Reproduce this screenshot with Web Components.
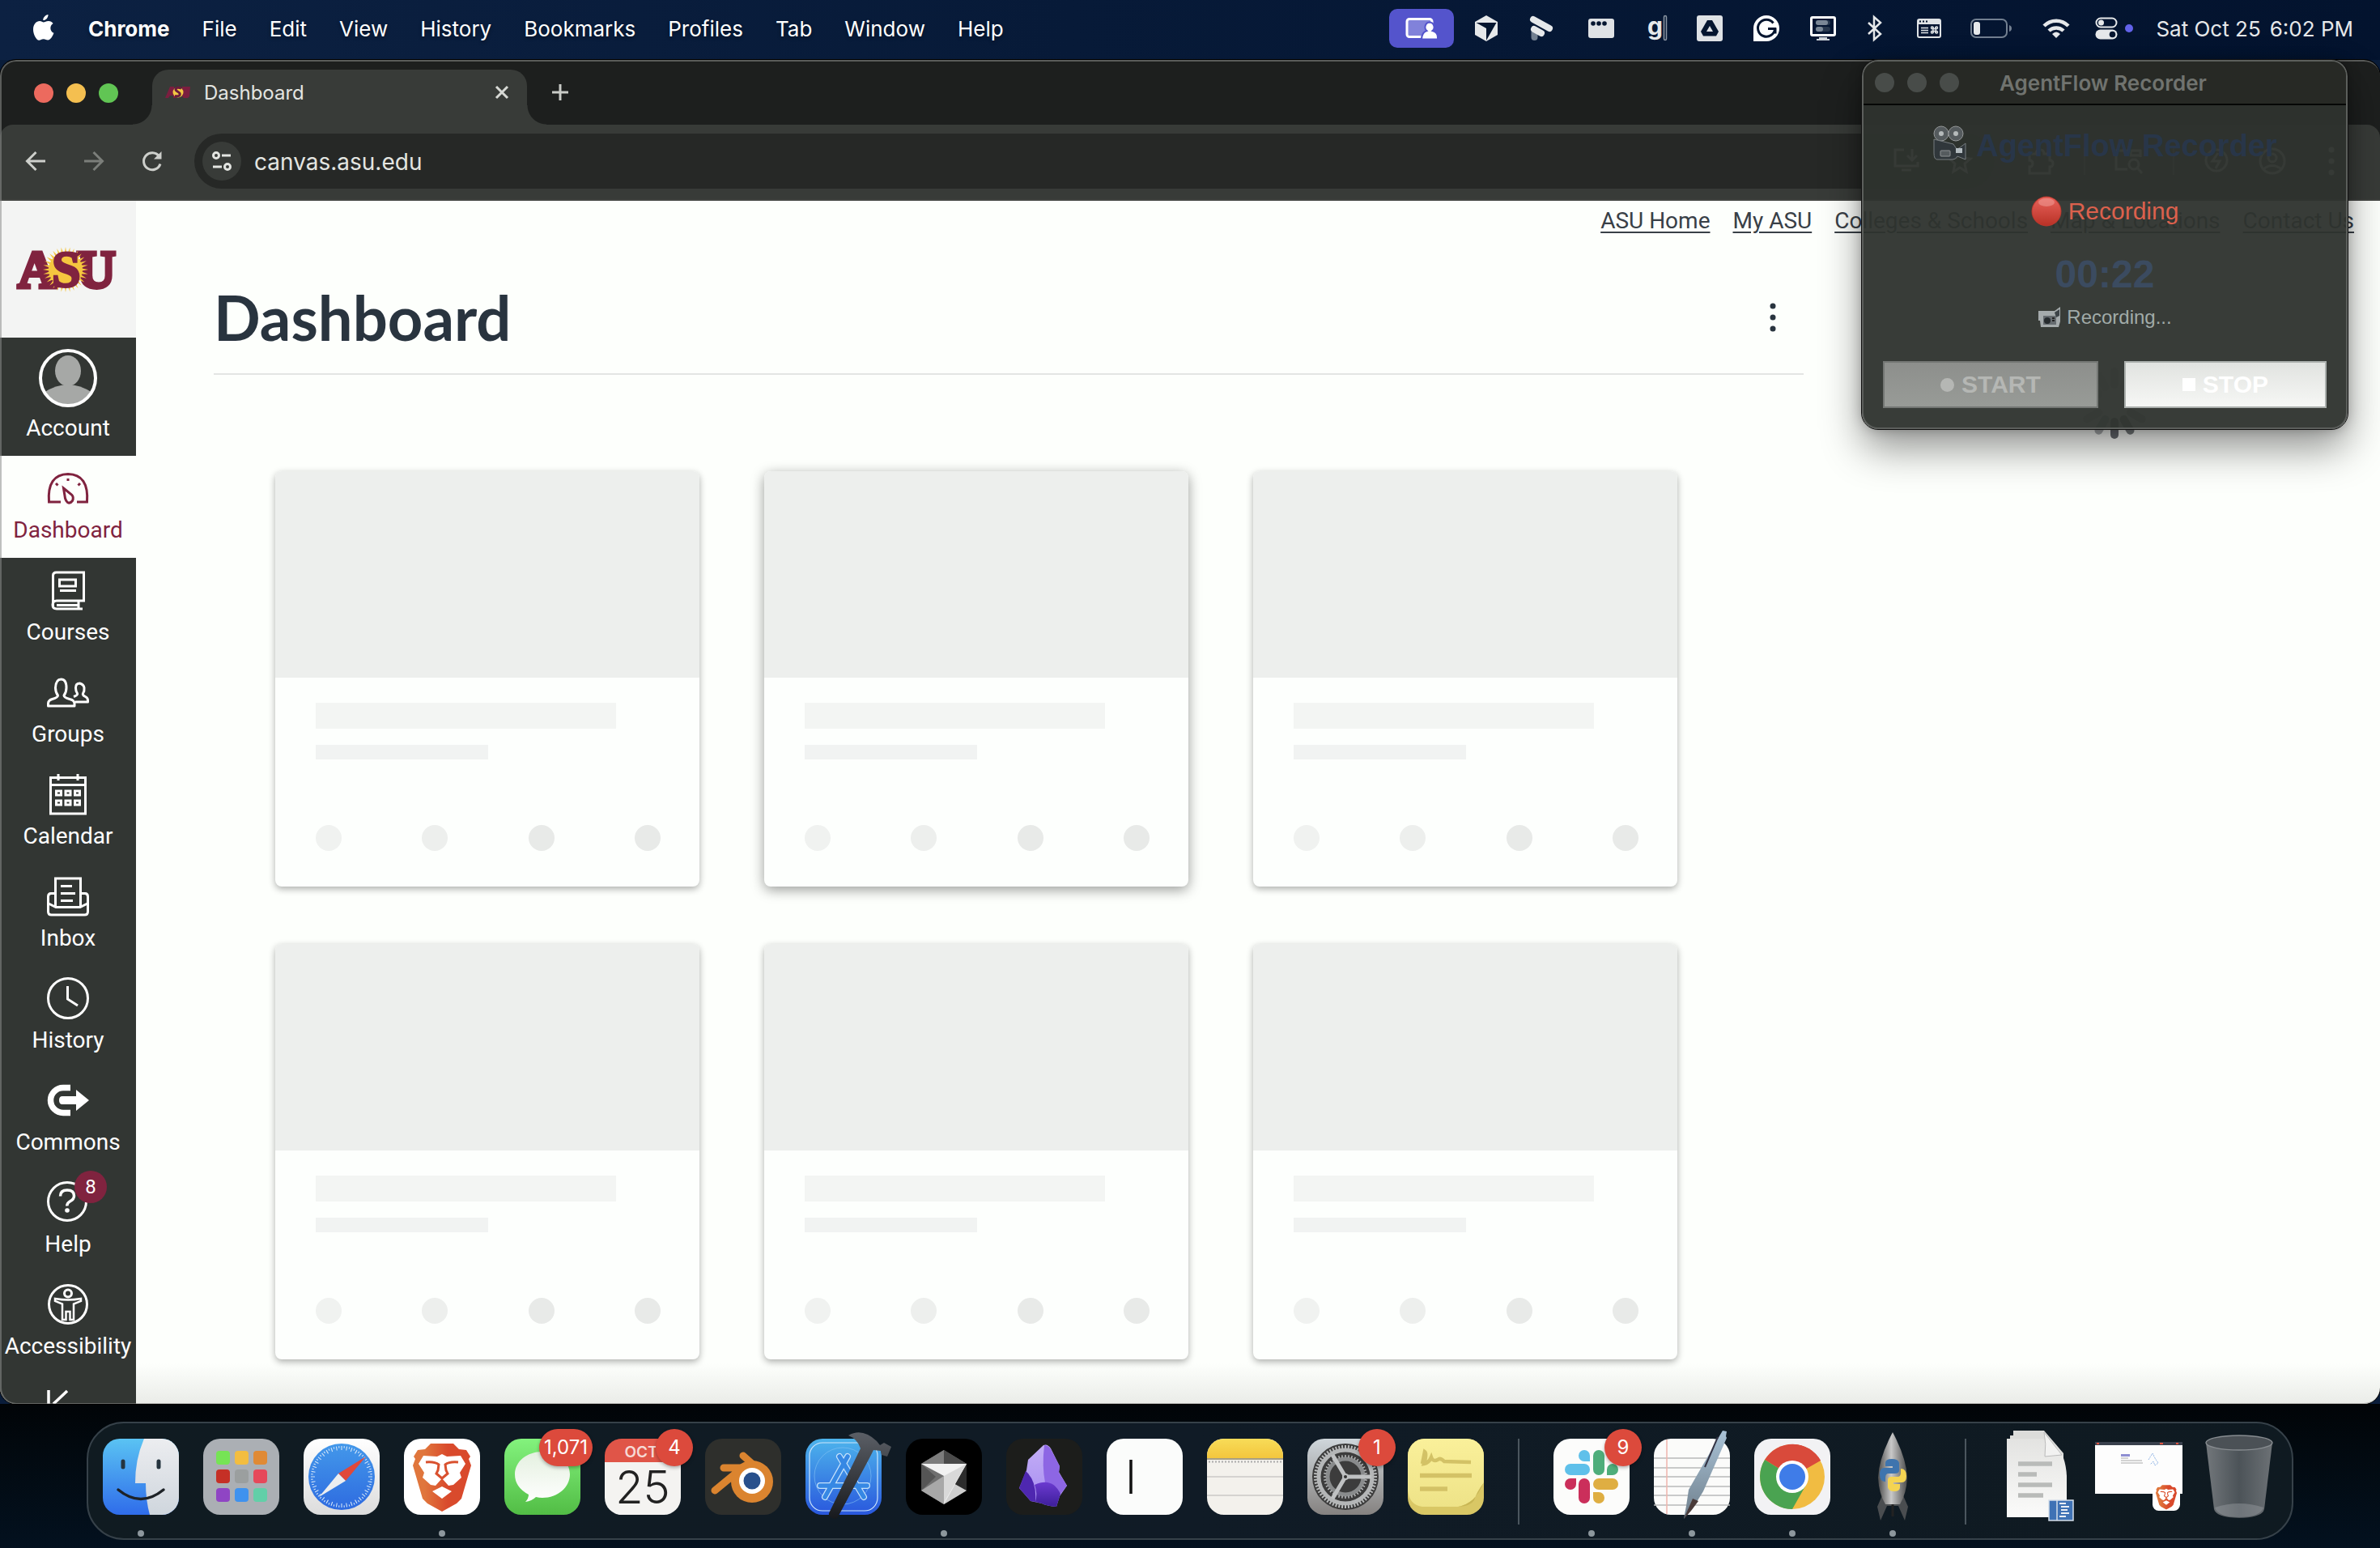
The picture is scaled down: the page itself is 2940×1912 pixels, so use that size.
<!DOCTYPE html>
<html lang="en">
<head>
<meta charset="utf-8">
<title>Dashboard</title>
<style>
html,body{margin:0;height:100%}
body{background:#020a14;font-family:Inter,"Liberation Sans",sans-serif;overflow:hidden}
</style>
</head>
<body>
<desktop-screen></desktop-screen>
<script>
const brave = `<path fill="url(#bl)" d="M33 6h28l7 7 9 1 5 8-2 3 3 8-12 41-6 6-18 10-18-10-6-6L11 33l3-8-2-3 5-8 9-1z"/><path fill="#fff" d="M24 21l17 1 6-3 6 3 17-1 6 10-7 11 2 6-10 9-6 1-8-9-8 9-6-1-10-9 2-6-7-11zM47 59l12 6-12 9-12-9z"/><path fill="none" stroke="#d9512f" stroke-width="3" d="M27 29q11-1 16 3l-1 7-2 4 7 6 7-6-2-4-1-7q5-4 16-3"/><defs><linearGradient id="bl"><stop offset=".2" stop-color="#e0763c"/><stop offset=".6" stop-color="#d94a2c"/></linearGradient></defs>`;
const tile = (fill) => `<rect width="94" height="94" rx="21" fill="${fill}"/>`;
const grad = (id,a,b) => `<defs><linearGradient id="${id}" x2="0" y2="1"><stop stop-color="${a}"/><stop offset="1" stop-color="${b}"/></linearGradient></defs>`;
const ticks = (n,cx,cy,r1,r2,w,c,d=1) => { let s=''; for(let i=0;i<n;i++){const t=i*2*Math.PI/n; const q=(i%2&&d>1)?(r2-r1)/2:0; s+=`M${(cx+(r1+q)*Math.cos(t)).toFixed(1)} ${(cy+(r1+q)*Math.sin(t)).toFixed(1)}L${(cx+r2*Math.cos(t)).toFixed(1)} ${(cy+r2*Math.sin(t)).toFixed(1)}`;} return `<path d="${s}" stroke="${c}" stroke-width="${w}" fill="none"/>`;};
const pads = ['#76e455','#f3bd40','#e08a35','#c53026','#9b9f9f','#e6485a','#8f45c4','#3f92ee','#62cfa8'].map((c,i)=>`<rect x="${16+(i%3)*23}" y="${15+Math.floor(i/3)*23}" width="17" height="17" rx="4" fill="${c}"/>`).join('');
const rays = (cx,cy,r1,r2,n) => { let s=''; for(let i=0;i<n;i++){const t=i*2*Math.PI/n,w=.09; const p=(r,a)=>(cx+r*Math.cos(a)).toFixed(1)+' '+(cy+r*Math.sin(a)).toFixed(1); s+=`M${p(r1,t-w)}L${p(r2,t)}L${p(r1,t+w)}z`;} return s;};

/* name: [width, height, viewBox, body] */
const ICONS = {
apple:[30,34,'0 0 30 34','<path fill="#fff" d="M20.500 0c.3 3.600-2.800 7.200-6.200 7.100C14 3.600 17.200.4 20.500 0zM14.800 9.500c1.500 0 3.300-1.700 6.200-1.600 2.300.1 4.300 1.100 5.600 3-4.800 3-4 9.800.9 11.900-1.400 4-4.400 8.800-7.300 8.800-2.200 0-2.800-1.300-5.500-1.300s-3.400 1.300-5.500 1.400C5.900 31.800 2 24.600 2 18.500 2 12 6 8.100 10 8.100c2.200 0 3.700 1.400 4.800 1.400z"/>'],
share:[40,28,'0 0 40 28','<rect x="2" y="2.500" width="31" height="22" rx="3" fill="#8182da" stroke="#fff" stroke-width="3"/><path d="M30 6.500a6 6 0 0 1 3.500 10.500c3.500 1 6.500 4 6.500 8v3H20c0-6 2-9.500 6.500-11A6 6 0 0 1 30 6.500z" fill="#fff" stroke="#5454cc" stroke-width="2"/><path d="M20 26.500h22V30H20z" fill="#5454cc"/>'],
cube:[30,32,'0 0 30 32','<path fill="#e6e8ea" d="M15 0l14 8v16l-14 8L1 24V8z"/><path fill="#04152f" d="M2.500 9h25L15 31V16z"/>'],
flow:[30,32,'0 0 30 32','<path d="M6.500 19v8" stroke="#727f90" stroke-width="8" stroke-linecap="round"/><path d="M5 5l20 11M6 17l9 5" stroke="#e6e8ea" stroke-width="8" stroke-linecap="round"/>'],
strip:[32,24,'0 0 32 24','<rect width="32" height="24" rx="3" fill="#dfe2e5"/><g fill="#04152f"><circle cx="6" cy="6" r="2.800"/><circle cx="13" cy="6" r="2.800"/><circle cx="20" cy="6" r="2.800"/></g>'],
gee:[26,34,'0 0 26 34','<text x="0" y="25" font-family="Inter,sans-serif" font-weight="700" font-size="30" fill="#e6e8ea">g</text><rect x="20.500" y="1.500" width="3" height="30" rx="1.500" fill="none" stroke="#8b96a3" stroke-width="1.500"/>'],
drive:[32,32,'0 0 32 32','<rect width="32" height="32" rx="3" fill="#dfe2e5"/><path d="M13 6h6l8 14-3 5.500H8L5 20z" fill="#04152f"/><path d="M16 13l4 7h-8z" fill="#dfe2e5"/>'],
gram:[32,32,'0 0 32 32','<path d="M16 0a16 16 0 1 1 0 32H0V16A16 16 0 0 1 16 0z" fill="#fff"/><path d="M24.500 9.500a10.500 10.500 0 1 0 2 7H18m9-1v7" fill="none" stroke="#04152f" stroke-width="3"/>'],
monitor:[32,30,'0 0 32 30','<rect x="1.500" y="1.500" width="29" height="22" rx="1.500" fill="none" stroke="#fff" stroke-width="3"/><rect x="7" y="5" width="18" height="6" rx="3" fill="#27374d"/><rect x="7" y="5" width="15" height="6" rx="3" fill="#7a8796"/><rect x="7" y="13" width="18" height="6" rx="3" fill="#27374d"/><rect x="7" y="13" width="9" height="6" rx="3" fill="#7a8796"/><path d="M11 26h10v2h3v2H8v-2h3z" fill="#cfd4da"/>'],
bt:[20,30,'0 0 20 30','<path d="M2 8l15 14-8 7V1l8 7L2 22" fill="none" stroke="#e6e8ea" stroke-width="2.500"/>'],
cmd:[30,24,'0 0 30 24','<rect x="1" y="1" width="28" height="22" rx="2" fill="none" stroke="#dfe2e5" stroke-width="2"/><path d="M1 1h28v6H1z" fill="#dfe2e5"/><path d="M3 3.500h2m2 0h2m2 0h2" stroke="#04152f" stroke-width="2"/><path d="M5 11.500h9M5 14.500h9M5 17.500h9" stroke="#dfe2e5" stroke-width="1.500"/><g fill="none" stroke="#dfe2e5" stroke-width="1.400"><path d="M20 10v8m3-8v8m-5-5.500h7m-7 3h7"/><rect x="17.500" y="10" width="2.500" height="2.500" rx="1"/><rect x="23" y="10" width="2.500" height="2.500" rx="1"/><rect x="17.500" y="15.500" width="2.500" height="2.500" rx="1"/><rect x="23" y="15.500" width="2.500" height="2.500" rx="1"/></g>'],
battery:[51,24,'0 0 51 24','<rect x="1" y="1" width="44" height="22" rx="6" fill="none" stroke="#727f90" stroke-width="2"/><rect x="4" y="4" width="8" height="16" rx="3" fill="#e6e8ea"/><path d="M48 8q3 1 3 4t-3 4z" fill="#727f90"/>'],
wifi:[34,26,'0 0 34 26','<path d="M2 10a21 21 0 0 1 30 0M8 16a13 13 0 0 1 18 0" fill="none" stroke="#e6e8ea" stroke-width="4.500"/><path d="M12 20q5-5 10 0l-5 5z" fill="#e6e8ea"/>'],
control:[28,28,'0 0 28 28','<rect x="1.500" y="1.500" width="25" height="11" rx="5.500" fill="none" stroke="#e6e8ea" stroke-width="2"/><circle cx="7.500" cy="7" r="3.500" fill="#e6e8ea"/><rect x=".5" y="15.500" width="27" height="12" rx="6" fill="#e6e8ea"/><circle cx="21.500" cy="21.500" r="3.800" fill="#04152f"/>'],
asufav:[32,16,'0 0 32 16','<path d="M0 15L6 1h5l3 14h-4v-3H6l-2 3zM21 1h10l-1 12-2 2h-5l-3-3z" fill="#7b1e3f"/><circle cx="16" cy="8" r="6.500" fill="#f2c843"/><path d="M20 3q-6-2-7 1 0 2 3 3.500t2 4q-1 2-6 1" fill="none" stroke="#6a1b3c" stroke-width="3"/>'],
close:[18,18,'0 0 18 18','<path d="M2 2l14 14M16 2L2 16" stroke="#d7d9d5" stroke-width="3"/>'],
plus:[22,22,'0 0 22 22','<path d="M11 1v20M1 11h20" stroke="#c9cbc7" stroke-width="3"/>'],
back:[26,26,'0 0 26 26','<path d="M25 13H3M13.500 2L2.500 13l11 11" fill="none" stroke="#cdcfcb" stroke-width="3"/>'],
fwd:[26,26,'0 0 26 26','<path d="M1 13h22M12.500 2l11 11-11 11" fill="none" stroke="#7b7e7a" stroke-width="3"/>'],
reload:[26,26,'0 0 26 26','<path d="M23 16.500A10.500 10.500 0 1 1 21.500 7" fill="none" stroke="#cdcfcb" stroke-width="3"/><path d="M24.500 1v9.500H15z" fill="#cdcfcb"/>'],
tune:[26,26,'0 0 26 26','<g fill="none" stroke="#e3e5e1" stroke-width="3"><circle cx="6" cy="6" r="3.500"/><path d="M13 6h11M2 20h11"/><circle cx="20" cy="20" r="3.500"/></g>'],
install:[34,32,'0 0 34 32','<path d="M14 2H3v20h28v-5M24 1v14m-6-6l6 6 6-6M11 27h12" fill="none" stroke="#c8cac6" stroke-width="3"/>'],
star:[30,30,'0 0 30 30','<path d="M15 2l4 9 9 1-7 6 2 10-8-5-8 5 2-10-7-6 9-1z" fill="none" stroke="#c8cac6" stroke-width="3"/>'],
puzzle:[34,34,'0 0 34 34','<path d="M3 8h8q0-5 5-5t5 5h7v8q4 0 4 4t-4 4v8H3v-8q4 0 4-4t-4-4z" fill="none" stroke="#c8cac6" stroke-width="3"/>'],
tabsearch:[36,34,'0 0 36 34','<path d="M16 27H2V4h30v8M20 4v6h12" fill="none" stroke="#c8cac6" stroke-width="3"/><circle cx="24" cy="21" r="6" fill="none" stroke="#c8cac6" stroke-width="3"/><path d="M28 25l6 7" stroke="#c8cac6" stroke-width="3"/>'],
bolt:[32,32,'0 0 32 32','<circle cx="16" cy="15" r="13" fill="none" stroke="#c8cac6" stroke-width="3"/><path d="M18 6l-7 10h9l-5 9" fill="none" stroke="#c8cac6" stroke-width="3"/>'],
profile:[34,34,'0 0 34 34','<circle cx="17" cy="17" r="15" fill="none" stroke="#c8cac6" stroke-width="3"/><circle cx="17" cy="13" r="5" fill="none" stroke="#c8cac6" stroke-width="3"/><path d="M6 27q11-9 22 0" fill="none" stroke="#c8cac6" stroke-width="3"/>'],
dots:[8,36,'0 0 8 36','<g fill="currentColor"><circle cx="4" cy="4" r="3.500"/><circle cx="4" cy="18" r="3.500"/><circle cx="4" cy="32" r="3.500"/></g>'],
asu:[120,56,'0 0 120 56',`<g font-family="Liberation Serif,serif" font-weight="700" font-size="66" fill="#80233f" stroke="#80233f" stroke-width="5"><text x="-2" y="50">A</text><text x="71" y="50">U</text></g><path d="${rays(57,28,19,28,32)}" fill="#f5c63f"/><circle cx="57" cy="28" r="21" fill="#f5c63f"/><text x="40" y="49" font-family="Liberation Serif,serif" font-weight="700" font-size="64" fill="#80233f" stroke="#80233f" stroke-width="3">S</text>`],
avatar:[72,72,'0 0 72 72','<clipPath id="av"><circle cx="36" cy="36" r="33"/></clipPath><circle cx="36" cy="36" r="34" fill="#323633"/><g clip-path="url(#av)" fill="#a6a8a6"><ellipse cx="36" cy="27" rx="16" ry="19"/><path d="M6 72V54q30-20 60 0v18z"/></g><circle cx="36" cy="36" r="34" fill="none" stroke="#fff" stroke-width="4"/>'],
dashboard:[52,52,'0 0 52 52','<g fill="none" stroke="currentColor" stroke-width="3"><path d="M17 43H2.500Q0 9 26 8.500 52 9 49.500 43H37"/><path d="M20.500 26l10 8q3 3 1 7.500-3 4-6 2-2-1.500-3-5z"/><path d="M26 14v3M11 20l2.500 2.500M41 20l-2.500 2.500"/></g>'],
courses:[52,52,'0 0 52 52','<g fill="none" stroke="currentColor" stroke-width="3"><path d="M7.500 46V8q0-4 4-4h34v35H12q-5 0-5 5t5 5h32M39 39v10M12 44.500h27M15.500 13h20v8h-20zM16 26.500h20"/></g>'],
groups:[52,52,'0 0 52 52','<g fill="none" stroke="currentColor" stroke-width="3" stroke-linejoin="round"><path d="M1.500 43v-3q0-4 5-5.500 7-2 7-4.500-3-4-3-9.500Q11 10 17.500 10T24 20.500q0 5.500-3 9.500 0 2.500 7 4.500 6 1.500 6 5.500v3z"/><path d="M35 38h15.500v-2q0-3-3-4.500-4-2-3-4 2-3 1.500-7T40.500 15q-5 0-5 5.500 0 4 2 7 1 2-4.500 4"/></g>'],
calendar:[52,52,'0 0 52 52','<g fill="none" stroke="currentColor" stroke-width="3"><path d="M4.500 5.500h43V50h-43zM4.500 14.500h43M14 1v8M38 1v8"/><path d="M11.500 22h6v5h-6zM23 22h6v5h-6zM34.500 22h6v5h-6zM11.500 34h6v5h-6zM23 34h6v5h-6zM34.500 34h6v5h-6z"/></g>'],
inbox:[52,52,'0 0 52 52','<g fill="none" stroke="currentColor" stroke-width="3"><path d="M10.500 39V4h31v35"/><path d="M10 22.500H5q-3.500 0-3.500 4V45q0 4 4 4h41q4 0 4-4V26.500q0-4-3.500-4h-5M2 35l9 4.500h30l9-4.500M17 13.500h14M17 22.500h18M17 31.500h15"/></g>'],
history:[52,52,'0 0 52 52','<g fill="none" stroke="currentColor" stroke-width="3"><circle cx="26" cy="26" r="24.500"/><path d="M25.500 11v16l12.500 8"/></g>'],
commons:[52,52,'0 0 52 52','<path fill="none" stroke="currentColor" stroke-width="7.500" d="M29 10.500h-9a15.500 15.500 0 0 0 0 31h9"/><path fill="currentColor" d="M36 13l16 13-16 13v-8H19q-4 0-4-5t4-5h17z"/>'],
help:[52,52,'0 0 52 52','<g fill="none" stroke="currentColor"><circle cx="25" cy="25" r="23.500" stroke-width="3"/><path stroke-width="3.500" d="M16.500 18.500q0-7.500 8.500-7.500t8.500 7q0 4-4.500 6.500t-4 6"/></g><circle cx="25" cy="36" r="2.800" fill="currentColor"/>'],
access:[52,52,'0 0 52 52','<g fill="none" stroke="currentColor" stroke-width="3"><circle cx="26" cy="26" r="23.500"/><circle cx="26" cy="12.500" r="4.500"/><path stroke-width="2.500" d="M10 19q16 3 32 0v3l-9 3.500V45h-4.500V35h-5v10H19V25.500L10 22z"/></g>'],
leave:[52,52,'0 0 52 52','<path fill="none" stroke="currentColor" stroke-width="3.500" d="M2 54V6M25 7L8 23"/>'],
spinner:[88,92,'0 0 88 92',(()=>{let s='';for(let i=0;i<12;i++){s+=`<rect x="39" y="2" width="10" height="26" rx="5" fill="#50555a" opacity="${[.3,.2,.2,.25,.4,.75,.85,.45,.3,.2,.2,.2][i]}" transform="rotate(${i*30} 44 46)"/>`}return s})()],
movie:[44,44,'0 0 44 44','<circle cx="11" cy="10" r="9" fill="#555b5e" stroke="#96999a"/><circle cx="29" cy="10" r="9" fill="#555b5e" stroke="#96999a"/><circle cx="11" cy="10" r="3" fill="#b5babb"/><circle cx="29" cy="10" r="3" fill="#b5babb"/><path d="M2 17l24 6 4 6 3-1 8-6v20l-10-4q-2 4-6 4H6q-4 0-4-8z" fill="#30373b" stroke="#777d80"/><rect x="10" y="31" width="12" height="7" rx="1" fill="#555b5e" stroke="#8f9394"/><rect x="29" y="28" width="8" height="6" fill="#b3bcc0"/>'],
ball:[38,38,'0 0 38 38',`${grad('rb','#e8625a','#b93227')}<circle cx="19" cy="19" r="18.500" fill="#b8382d"/><circle cx="19" cy="19" r="17.500" fill="url(#rb)"/><ellipse cx="19" cy="8" rx="10" ry="5" fill="#f2a59f" opacity=".5"/>`],
camcorder:[30,28,'0 0 30 28','<path d="M1 6h20l7-5v18l-2 7H4l-1-8H1z" fill="#a5abac"/><path d="M21 8l6-4v8l-4 2z" fill="#3c4347"/><rect x="7" y="12" width="16" height="11" fill="#666c70"/><circle cx="12" cy="18" r="4" fill="#262b2e"/><path d="M18 15h3m-3 3h3" stroke="#222" stroke-width="2"/>'],
finder:[94,94,'0 0 94 94',`${grad('fa','#5ac3f3','#2f6cea')}${grad('fb','#ecedf0','#cfd6dd')}<clipPath id="fc"><rect width="94" height="94" rx="21"/></clipPath><g clip-path="url(#fc)"><path d="M0 0h94v94H0z" fill="url(#fa)"/><path d="M51 0h43v94H58q-5-18-5-39H40Q40 25 51 0z" fill="url(#fb)"/></g><path d="M25 28v7M69 28v7" stroke="#25343f" stroke-width="5" stroke-linecap="round"/><path d="M19 63q28 23 56 0" fill="none" stroke="#1d2227" stroke-width="3.500" stroke-linecap="round"/>`],
launch:[94,94,'0 0 94 94',tile('#abafb4')+pads],
safari:[94,94,'0 0 94 94',`${grad('sa','#ffffff','#dcdcdc')}${grad('sb','#4398ea','#2e6be0')}${tile('url(#sa)')}<circle cx="47" cy="47" r="41" fill="url(#sb)"/>${ticks(72,47,47,33,38,1.1,'#cfe3f8',2)}<path d="M77 22L52 52l-9-9z" fill="#e0483a"/><path d="M19 72l24-29 9 9z" fill="#eceef0"/>`],
brave:[94,94,'0 0 94 94',tile('#fff')+brave],
messages:[94,94,'0 0 94 94',`${grad('ma','#83f27d','#52bd45')}${grad('mb','#e4f0e0','#ffffff')}${tile('url(#ma)')}<path d="M47 16c19 0 34 12 34 28S66 73 47 73q-4 0-8-1-5 5-13 6 4-4 4-9-17-9-17-25c0-16 15-28 34-28z" fill="url(#mb)"/>`],
cal:[94,94,'0 0 94 94',`<path d="M0 29V21A21 21 0 0 1 21 0h52a21 21 0 0 1 21 21v8z" fill="#e05548"/><path d="M0 29h94v44a21 21 0 0 1-21 21H21A21 21 0 0 1 0 73z" fill="#f4f3f1"/><text x="45" y="23" text-anchor="middle" font-family="Inter,sans-serif" font-weight="600" font-size="19" fill="#f6d9d5">OCT</text><text x="47" y="80" text-anchor="middle" font-family="Inter,sans-serif" font-weight="300" font-size="56" fill="#222">25</text>`],
blender:[94,94,'0 0 94 94',`${tile('#2e2f2c')}<path d="M12 64l34-28H23M47 21l27 24" fill="none" stroke="#db842f" stroke-width="9" stroke-linecap="round" stroke-linejoin="round"/><circle cx="58" cy="53" r="26" fill="#db842f"/><circle cx="58" cy="52" r="16" fill="#fff"/><circle cx="58" cy="52" r="10.500" fill="#28508c"/>`],
xcode:[106,110,'-6 -8 106 110',`${grad('xa','#4db4ec','#2957dd')}${grad('xb','#5b5f66','#17191d')}${tile('url(#xa)')}<rect x="5" y="5" width="84" height="84" rx="16" fill="none" stroke="#cde6fb" stroke-width="1.200"/><circle cx="46" cy="46" r="35" fill="none" stroke="#86c3f4" opacity=".6"/><g fill="none" stroke="#c5e2fb" stroke-width="8" stroke-linecap="round"><path d="M52 22L24 72M42 22l30 50M18 58h58"/></g><g fill="none" stroke="#3688e4" stroke-width="5.500" stroke-linecap="round"><path d="M52 22L24 72M42 22l30 50M18 58h58"/></g><path d="M53-4Q70-14 88 3l4 5 5-3 9 5-5 12-7-2-1-5-9-1-5 10-38 71q-3 6-8 3-5-2-4-6L68 12Q64 0 53-4z" fill="url(#xb)"/>`],
cursor:[94,94,'0 0 94 94',`${tile('#000')}<path d="M47 14l28 17v33L47 81 19 64V31z" fill="#6f6f6f"/><path d="M47 14l28 17H19z" fill="#4a4a4a"/><path d="M47 14v17H19z" fill="#7d7d7d"/><path d="M19 31v33l18-17z" fill="#555"/><path d="M19 64l28-18v35z" fill="#a8a8a8"/><path d="M47 81l28-17-16-9z" fill="#cfcfcf"/><path d="M75 31v33L59 55z" fill="#2c2c2c"/><path d="M19 31h56L47 81V46z" fill="#f2f2f2"/><path d="M75 31L47 46v33z" fill="#d9d9d9"/>`],
obsidian:[94,94,'0 0 94 94',`${grad('oa','#c3aef6','#a58bf0')}${grad('ob','#6b3ad0','#3d1e9a')}${tile('#1c1d1b')}<path d="M46 8q5-2 9 4l11 22-1 7 10 17-9 13-4 13q-12-1-18-4l-14-3-14-16 9-22 2-13z" fill="url(#oa)"/><path d="M47 8q5 0 8 5l11 21-1 8 10 16-8 10q-5-12-19-14-4-20-1-46z" fill="#8d66e4"/><path d="M24 40q14 12 12 38l-6-1-14-16z" fill="#4e27b0"/><path d="M35 57q22-10 32 11l-5 16q-12-1-18-4l-8-2q3-10-1-21z" fill="url(#ob)"/>`],
caret:[94,94,'0 0 94 94',tile('#fbfcfb')+'<path d="M30 26v42" stroke="#111" stroke-width="3.500"/>'],
notes:[94,94,'0 0 94 94',`${grad('na','#f8dc58','#f3c63d')}${tile('#f3f1ec')}<path d="M0 24v-3A21 21 0 0 1 21 0h52a21 21 0 0 1 21 21v3z" fill="url(#na)"/><path d="M0 25h94" stroke="#a79f83" stroke-width="2"/><path d="M2 28.500h90" stroke="#aaa" stroke-width="2" stroke-dasharray="2 2"/><path d="M0 47h94M0 70h94" stroke="#cbc9c6" stroke-width="1.500"/>`],
settings:[94,94,'0 0 94 94',`${grad('ga','#cfd6db','#858280')}${tile('url(#ga)')}<circle cx="47" cy="47" r="41" fill="#3c3c3c"/>${ticks(60,47,47,34,39,2,'#b9bbbc')}<circle cx="47" cy="47" r="33" fill="none" stroke="#b4b6b7" stroke-width="5"/><circle cx="47" cy="47" r="22" fill="none" stroke="#898b8c" stroke-width="5"/>${ticks(40,47,47,24,27,1.5,'#b9bbbc')}<path d="M47 47h32M47 47L31 20M47 47L31 74" stroke="#bfc1c2" stroke-width="5"/><circle cx="47" cy="47" r="4" fill="#bfc1c2"/><circle cx="47" cy="47" r="2" fill="#333"/>`],
stickies:[94,94,'0 0 94 94',`${grad('ka','#faf09a','#eee388')}${tile('#d9c765')}<path d="M21 0h52a21 21 0 0 1 21 21v33Q84 80 62 84H18Q2 82 0 64V21A21 21 0 0 1 21 0z" fill="url(#ka)"/><path d="M94 54Q84 80 62 84q16-1 20-8 3-10 12-22z" fill="#c8b654"/><path d="M18 31l3-15q3 2-1 15 6-1 9-8 2 6 8 3 3-3 8 2l33 1" fill="none" stroke="#d3c266" stroke-width="4.500"/><path d="M15 45.500h64M15 62h34" stroke="#d3c266" stroke-width="5.500"/>`],
slack:[94,94,'0 0 94 94',`${tile('#fcfcfb')}<g stroke-width="14" stroke-linecap="round"><path d="M21 38h17" stroke="#5fc0ea"/><path d="M56 21v17" stroke="#4fae7b"/><path d="M56 56h17" stroke="#dfae42"/><path d="M38 56v17" stroke="#cb2f5b"/></g><path d="M45 28h-7a7 7 0 1 1 7-7z" fill="#5fc0ea"/><path d="M66 45v-7a7 7 0 1 1 7 7z" fill="#4fae7b"/><path d="M49 66h7a7 7 0 1 1-7 7z" fill="#dfae42"/><path d="M28 49v7a7 7 0 1 1-7-7z" fill="#cb2f5b"/>`],
textedit:[94,110,'0 -8 94 110',`${grad('ta','#a9c2d6','#6f7f8c')}${tile('#fbfbfa')}<path d="M0 24h94M0 36h94M0 47h94M0 59h94M0 70h94M0 82h94" stroke="#b9bbba" stroke-width="1.500"/><path d="M16 1v92" stroke="#efb5ad" stroke-width="1.500"/><path d="M82-5l3-5 5 1-1 6 1 2-29 66-13 21-11 13 3-16 3-20z" fill="url(#ta)"/><path d="M48 74l7 3-9 12-9 10z" fill="#4a3b3a"/><path d="M79-2L63 35" stroke="#334" stroke-width="2"/>`],
chrome:[94,94,'0 0 94 94',`${tile('#f2f2f4')}<circle cx="47" cy="47" r="40" fill="#f1bc42"/><path d="M47 47L13 26a40 40 0 0 1 69 1z" fill="#d94a3b"/><path d="M47 7a40 40 0 0 1 35 20H47z" fill="#d94a3b"/><path d="M13 26a40 40 0 0 0 34 61l17-30-17-10z" fill="#4aa351"/><circle cx="47" cy="47" r="20" fill="#fff"/><circle cx="47" cy="47" r="16" fill="#3f7ce8"/>`],
rocket:[42,110,'0 0 42 110',`<defs><linearGradient id="ro"><stop stop-color="#4c4c4c"/><stop offset=".45" stop-color="#c9c9c9"/><stop offset="1" stop-color="#4c4c4c"/></linearGradient></defs><path d="M9 76L2 92l4 17 8-18h14l8 18 4-17-7-16z" fill="#4a4d50"/><path d="M21 0q17 32 18 56-1 20-9 33H12Q4 76 3 56 4 32 21 0z" fill="url(#ro)"/><path d="M12 38q0-5 8-5t9 5v9q0 4-5 4h-8q-4 0-4 5v5q-7 0-7-9t7-8h9v-2h-9z" fill="#3e74ae"/><path d="M31 45q7 0 7 9t-7 8h-9v2h8v4q0 5-7 5t-8-5v-9q0-4 5-4h7q4 0 4-5z" fill="#f4d452"/><path d="M21 89v15" stroke="#222" stroke-width="3"/>`],
docs:[90,114,'-6 0 90 114',`${grad('da','#e3e3e1','#fbfbfa')}<path d="M8 0h38l24 28v40H4V6h4z" fill="#dcdcda"/><path d="M0 10h46q26 8 28 46v51H0z" fill="url(#da)"/><path d="M46 2l22 28-21 2q2-16-1-30z" fill="#f2f2f1" stroke="#bbb"/><path d="M14 41h42M14 54h23M14 67h42M14 80h31" stroke="#b9bbb9" stroke-width="5.500"/><rect x="52" y="86" width="30" height="25" fill="#3f72b5" stroke="#d5dee9" stroke-width="1.500"/><path d="M62 86v25" stroke="#d5dee9" stroke-width="1.500"/><path d="M65 90h8m-6 4h10m-10 4h8m-8 4h10m-12 4h8" stroke="#e9eef5" stroke-width="2"/>`],
miniwin:[108,86,'0 0 108 86',`<rect width="108" height="64" fill="#fdfdfd"/><rect width="108" height="4" fill="#39404d"/><path d="M2 2h3M100 2h3M80 2h4" stroke="#e0533f" stroke-width="2"/><path d="M32 16.500h11" stroke="#8f8fd2" stroke-width="3"/><path d="M32 20h9M32 23h26M32 26h27" stroke="#aaa"/><path d="M66 22l5-8 3 6 4 6-4 3-2-5-4 4" fill="none" stroke="#8fb4e6" stroke-dasharray="2 1"/><svg x="70" y="51" width="36" height="34" viewBox="0 0 94 94">${tile('#fff')}${brave}</svg>`],
trash:[84,104,'0 0 84 104',`<defs><linearGradient id="tr"><stop stop-color="#72777b"/><stop offset=".5" stop-color="#4c5358"/><stop offset="1" stop-color="#6c7175"/></linearGradient></defs><path d="M1 10l10 82q2 10 31 11 29-1 31-11L83 10z" fill="url(#tr)"/><ellipse cx="42" cy="10" rx="41" ry="9" fill="#4b5156" stroke="#878c90" stroke-width="1.500"/><path d="M12 90q4 12 30 12t30-12q-30-10-60 0z" fill="#9a9ea1" opacity=".45"/>`]
};

const define = (name, html, setup) => customElements.define(name, class extends HTMLElement {
  constructor(){ super(); this.attachShadow({mode:'open'}); }
  connectedCallback(){ this.shadowRoot.innerHTML = typeof html === 'function' ? html(this) : html; if(setup) setup(this); }
});

define('ui-icon', el => { const [w,h,v,b] = ICONS[el.getAttribute('name')];
  return `<style>:host{display:inline-flex;flex:none}svg{display:block;overflow:visible}</style><svg width="${w}" height="${h}" viewBox="${v}" aria-hidden="true">${b}</svg>`; });

define('menu-bar', () => `<style>
:host{display:flex;justify-content:space-between;height:74px;box-sizing:border-box;padding:0 33px 0 39px;background:linear-gradient(90deg,#0c2142,#071a38 45%,#03132e);color:#fff;font-size:26px}
nav,.status{display:flex;align-items:center;height:70px}
nav{gap:40px}
a{color:inherit;text-decoration:none;text-shadow:0 2px 4px rgba(0,0,0,.4)}
.app{font-weight:700}
.status{color:#e6e8ea}
.share{display:flex;align-items:center;justify-content:center;width:80px;height:48px;padding:0;border:0;border-radius:10px;background:#5454cc;margin-right:7px}
.cell{display:flex;justify-content:center}
.dot{width:10px;height:10px;border-radius:5px;background:#6262ea;margin:0 28px 0 4px}
time{display:flex;gap:11px}
</style>
<nav><ui-icon name="apple"></ui-icon><a class="app" href="#">Chrome</a>${['File','Edit','View','History','Bookmarks','Profiles','Tab','Window','Help'].map(t=>`<a href="#">${t}</a>`).join('')}</nav>
<div class="status"><button class="share" aria-label="Screen sharing"><ui-icon name="share"></ui-icon></button>
${[['cube',66],['flow',69],['strip',80],['gee',60],['drive',68],['gram',72],['monitor',68],['bt',59],['cmd',76],['battery',76],['wifi',86],['control',38]].map(([n,w])=>`<span class="cell" style="width:${w}px"><ui-icon name="${n}"></ui-icon></span>`).join('')}
<span class="dot"></span><time><span>Sat Oct 25</span><span>6:02 PM</span></time></div>`);

define('browser-window', () => `<style>
:host{display:flex;flex-direction:column;min-height:0;position:relative;border-radius:20px;overflow:hidden;background:#1d1f1e;box-shadow:0 0 0 1px #000}
:host::after{content:"";position:absolute;inset:0;border-radius:20px;border:2px solid rgba(140,142,140,.55);border-width:2px 0 1px 2px;pointer-events:none}
.tabs{display:flex;align-items:flex-end;height:80px;flex:none}
.lights{display:flex;gap:16px;padding:0 42px 27px 42px}
.lights i{width:24px;height:24px;border-radius:50%;background:#ec6a5e}
.lights i:nth-child(2){background:#f4bf50}.lights i:nth-child(3){background:#61c554}
.tab{display:flex;align-items:center;box-sizing:border-box;width:463px;height:68px;padding:0 22px 12px 16px;background:#383b38;border-radius:20px 20px 0 0;position:relative;color:#e3e5e1;font-size:24px}
.tab::before,.tab::after{content:"";position:absolute;bottom:0;width:24px;height:24px;right:100%;background:radial-gradient(circle at 0 0,transparent 23px,#383b38 24px)}
.tab::after{right:auto;left:100%;background:radial-gradient(circle at 100% 0,transparent 23px,#383b38 24px)}
.tab span{flex:1;padding-left:16px}
button{display:flex;background:none;border:0;padding:0;color:#c8cac6}
.new{margin:0 0 29px 30px}
.bar{display:flex;align-items:center;height:94px;box-sizing:border-box;padding:0 40px 2px 31px;background:#383b38;border-radius:16px 16px 0 0;flex:none;border-bottom:2px solid #414340}
.bar .nav{display:flex;gap:46px;margin-right:39px}
.omni{display:flex;align-items:center;flex:1;height:68px;border-radius:34px;background:#262826;padding:0 28px 0 10px}
.chip{width:48px;height:48px;border-radius:24px;background:#383b38;align-items:center;justify-content:center}
input{flex:1;min-width:0;border:0;background:none;color:#e3e5e1;font:28px Inter,sans-serif;padding:2px 0 0 16px}
.omni .acts{display:flex;gap:34px;align-items:center}
.ext{display:flex;align-items:center;gap:36px;margin-left:40px}
.ext i{width:2px;height:34px;background:#6a6d69}
.ext ui-icon:last-of-type{margin-right:16px}
</style>
<div class="tabs"><div class="lights"><i></i><i></i><i></i></div>
<div class="tab"><ui-icon name="asufav"></ui-icon><span>Dashboard</span><button aria-label="Close tab"><ui-icon name="close"></ui-icon></button></div>
<button class="new" aria-label="New tab"><ui-icon name="plus"></ui-icon></button></div>
<div class="bar"><div class="nav"><button aria-label="Back"><ui-icon name="back"></ui-icon></button><button aria-label="Forward"><ui-icon name="fwd"></ui-icon></button><button aria-label="Reload"><ui-icon name="reload"></ui-icon></button></div>
<div class="omni"><button class="chip" aria-label="Site information"><ui-icon name="tune"></ui-icon></button><input aria-label="Address" value="canvas.asu.edu"><div class="acts"><ui-icon name="install"></ui-icon><ui-icon name="star"></ui-icon></div></div>
<div class="ext"><ui-icon name="puzzle"></ui-icon><i></i><ui-icon name="tabsearch"></ui-icon><i></i><ui-icon name="bolt"></ui-icon><ui-icon name="profile"></ui-icon><button aria-label="More"><ui-icon name="dots"></ui-icon></button></div></div>
<slot></slot>`);

define('nav-item', el => `<style>
:host{display:block}
a{display:flex;flex-direction:column;align-items:center;gap:9px;padding:14px 0 17px;color:#fff;text-decoration:none;font:28px/34px Roboto,sans-serif;white-space:nowrap}
:host([active]) a{background:#fdfffc;color:#80233f}
.ic{position:relative;display:flex}
b{position:absolute;left:34px;top:-13px;width:40px;height:40px;border-radius:20px;background:#80233f;color:#fff;font:24px/40px Roboto,sans-serif;text-align:center}
</style><a href="#"><span class="ic"><ui-icon name="${el.getAttribute('icon')}"></ui-icon>${el.hasAttribute('badge')?`<b>${el.getAttribute('badge')}</b>`:''}</span><span><slot></slot></span></a>`);

define('course-card', () => `<style>
:host{display:block;background:#fdfffd;border-radius:8px;overflow:hidden;box-shadow:0 3px 8px rgba(0,0,0,.32)}
:host([raised]){box-shadow:0 4px 16px rgba(0,0,0,.4)}
.hero{height:255px;background:#edefed}
.body{display:flex;flex-direction:column;align-items:flex-start;padding:31px 48px 44px 50px;box-sizing:border-box;height:258px}
.l1{width:87%;height:32px;background:#f3f5f3}
.l2{width:50%;height:18px;margin-top:20px;background:#f1f3f2}
.row{display:flex;justify-content:space-between;width:100%;margin-top:auto;padding-right:0;box-sizing:border-box}
.row i{width:32px;height:32px;border-radius:16px;background:#e8eae8}
.row i:nth-child(1){background:#f0f2f0}.row i:nth-child(2){background:#edefed}
</style><div class="hero"></div><div class="body"><div class="l1"></div><div class="l2"></div><div class="row"><i></i><i></i><i></i><i></i></div></div>`);

define('canvas-page', () => `<style>
:host{display:flex;flex:1;min-height:0;overflow:hidden;background:linear-gradient(#fdfffc calc(100% - 50px),#eaece8)}
aside{width:168px;flex:none;background:#323633;overflow:hidden}
.logo{display:flex;justify-content:center;align-items:center;height:169px;background:#f3f4f3}
main{flex:1;min-width:0;overflow:hidden}
.links{display:flex;justify-content:flex-end;gap:28px;padding:6px 32px 0 0;font:28px/38px Roboto,sans-serif}
.links a{color:#394047;text-underline-offset:4px}
.cols{display:flex;gap:56px;padding-left:96px}
.primary{flex:1;min-width:0}
header{display:flex;justify-content:space-between;align-items:center;padding:47px 34px 17px 0;height:105px;border-bottom:2px solid #e3e5e3}
h1{margin:0;font:700 76px/92px Lato,sans-serif;color:#29343f}
header button{border:0;background:none;padding:0;display:flex;color:#29343f}
.grid{display:grid;grid-template-columns:repeat(auto-fill,524px);gap:71px 80px;padding:119px 0 0 76px}
.side{width:656px;display:flex;justify-content:center;padding-top:160px;align-items:flex-start}
</style>
<aside><div class="logo"><ui-icon name="asu"></ui-icon></div>
<nav-item icon="avatar">Account</nav-item><nav-item icon="dashboard" active>Dashboard</nav-item><nav-item icon="courses">Courses</nav-item><nav-item icon="groups">Groups</nav-item><nav-item icon="calendar">Calendar</nav-item><nav-item icon="inbox">Inbox</nav-item><nav-item icon="history">History</nav-item><nav-item icon="commons">Commons</nav-item><nav-item icon="help" badge="8">Help</nav-item><nav-item icon="access">Accessibility</nav-item><nav-item icon="leave"></nav-item></aside>
<main><div class="links"><a href="#">ASU Home</a><a href="#">My ASU</a><a href="#">Colleges &amp; Schools</a><a href="#">Map &amp; Locations</a><a href="#">Contact Us</a></div>
<div class="cols"><div class="primary"><header><h1>Dashboard</h1><button aria-label="Dashboard options"><ui-icon name="dots"></ui-icon></button></header>
<div class="grid"><course-card></course-card><course-card raised></course-card><course-card></course-card><course-card></course-card><course-card></course-card><course-card></course-card></div></div>
<div class="side"><ui-icon name="spinner"></ui-icon></div></div></main>`);

define('recorder-window', () => `<style>
:host{display:block;width:600px;height:456px;box-sizing:border-box;border-radius:20px;background:rgba(46,50,46,.953);border:2px solid #5c5f5c;outline:1px solid #111;box-shadow:0 24px 50px rgba(0,0,0,.42),0 0 16px rgba(0,0,0,.25);font-family:"Liberation Sans",sans-serif;overflow:hidden}
.title{display:flex;align-items:center;height:52px;background:#272925;border-bottom:2px solid #060706;padding:0 14px;gap:16px;color:#70736f;font:600 26px Inter,sans-serif}
.title i{width:24px;height:24px;border-radius:12px;background:#484c49}
.title span{margin-left:34px}
.body{display:flex;flex-direction:column;align-items:center;padding:26px 24px 0}
.body>div{display:flex;align-items:center;justify-content:center}
.head{font:700 38px/48px "Liberation Sans",sans-serif;color:#283649;gap:10px}
.head ui-icon{margin-top:-6px}
.rec{font-size:30px;line-height:40px;color:#dc614d;gap:8px;margin-top:37px}
.time{font-weight:700;font-size:48px;line-height:56px;color:#3b4b60;margin-top:30px}
.msg{font-size:24px;line-height:32px;color:#a1aba8;gap:6px;margin-top:9px}
.body .btns{display:flex;gap:32px;margin-top:38px;width:100%}
button{display:flex;align-items:center;justify-content:center;gap:9px;height:58px;box-sizing:border-box;flex:266;padding:0;border:2px solid #747774;background:linear-gradient(#8d8f8c,#989b97);color:#b5b7b4;font:700 30px "Liberation Sans",sans-serif}
button+button{flex:250;background:linear-gradient(#e1e3e0,#f6f7f5);border-color:#abb0ad;color:#fff}
button i{width:17px;height:17px;border-radius:50%;background:currentColor}
button+button i{border-radius:0;width:16px;height:16px}
</style>
<div class="title"><i></i><i></i><i></i><span>AgentFlow Recorder</span></div>
<div class="body"><div class="head"><ui-icon name="movie"></ui-icon><span>AgentFlow Recorder</span></div>
<div class="rec"><ui-icon name="ball"></ui-icon><span>Recording</span></div>
<div class="time">00:22</div>
<div class="msg"><ui-icon name="camcorder"></ui-icon><span>Recording...</span></div>
<div class="btns"><button disabled><i></i>START</button><button><i></i>STOP</button></div></div>`);

define('dock-item', el => `<style>
:host{display:flex;position:relative;width:94px;height:94px;align-items:center;justify-content:center;flex:none}
button{display:flex;align-items:center;justify-content:center;width:94px;height:94px;padding:0;border:0;background:none}
b{position:absolute;right:-15px;top:-12px;min-width:46px;height:46px;box-sizing:border-box;padding:0 6px;border-radius:23px;background:#dc4a3c;color:#fff;font:400 24px/46px Inter,sans-serif;text-align:center;box-shadow:0 2px 4px rgba(0,0,0,.3)}
i{position:absolute;bottom:-27px;left:43px;width:8px;height:8px;border-radius:4px;background:#8d979d}
</style><button aria-label="${el.getAttribute('icon')}"><ui-icon name="${el.getAttribute('icon')}"></ui-icon></button>${el.hasAttribute('badge')?`<b>${el.getAttribute('badge')}</b>`:''}${el.hasAttribute('running')?'<i></i>':''}`);

define('app-dock', () => `<style>
:host{display:flex;justify-content:center;padding:22px 0 10px;background:linear-gradient(#010407,#02090f 30%,#03111f)}
.shelf{display:flex;gap:30px;box-sizing:border-box;height:146px;padding:19px 18px 0;border:2px solid #364149;border-radius:46px;background:linear-gradient(90deg,#101b21,#101b26 50%,#0f1a21)}
hr{width:2px;height:106px;margin:0 12px;border:0;background:#4b565e}
</style><div class="shelf">
<dock-item icon="finder" running></dock-item><dock-item icon="launch"></dock-item><dock-item icon="safari"></dock-item><dock-item icon="brave" running></dock-item><dock-item icon="messages" badge="1,071"></dock-item><dock-item icon="cal" badge="4"></dock-item><dock-item icon="blender"></dock-item><dock-item icon="xcode"></dock-item><dock-item icon="cursor" running></dock-item><dock-item icon="obsidian"></dock-item><dock-item icon="caret"></dock-item><dock-item icon="notes"></dock-item><dock-item icon="settings" badge="1"></dock-item><dock-item icon="stickies"></dock-item><hr>
<dock-item icon="slack" badge="9" running></dock-item><dock-item icon="textedit" running></dock-item><dock-item icon="chrome" running></dock-item><dock-item icon="rocket" running></dock-item><hr>
<dock-item icon="docs"></dock-item><dock-item icon="miniwin"></dock-item><dock-item icon="trash"></dock-item></div>`);

define('desktop-screen', () => `<style>
:host{display:flex;flex-direction:column;height:100vh;position:relative;background:#0a1d3a}
browser-window{flex:1}
recorder-window{position:absolute;top:74px;right:40px}
</style><menu-bar></menu-bar><browser-window><canvas-page></canvas-page></browser-window><app-dock></app-dock><recorder-window></recorder-window>`);
</script>
</body>
</html>
